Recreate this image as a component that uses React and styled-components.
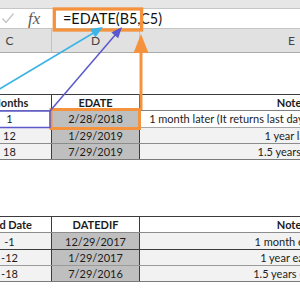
import React from 'react';
import styled, { createGlobalStyle } from 'styled-components';

const GlobalStyle = createGlobalStyle`
  html, body {
    margin: 0;
    padding: 0;
    background: #fff;
  }
  body {
    width: 300px;
    height: 300px;
    overflow: hidden;
  }
`;

const Sheet = styled.div`
  position: relative;
  width: 300px;
  height: 300px;
  overflow: hidden;
  background: #fff;
  font-family: Lato, "Liberation Sans", sans-serif;
  color: #1c1c1c;
`;

const TopStrip = styled.div`
  height: 8px;
  background: #e6e6e6;
  border-bottom: 1px solid #c6c6c6;
`;

const FormulaRow = styled.div`
  display: flex;
  align-items: center;
  height: 19px;
  border-bottom: 1px solid #c6c6c6;
  background: #fff;
`;

const NameArea = styled.div`
  display: flex;
  align-items: center;
  gap: 14px;
  width: 52px;
  padding-left: 2px;
  box-sizing: border-box;
`;

const Fx = styled.span`
  font-family: "Liberation Serif", serif;
  font-style: italic;
  font-size: 17px;
  color: #5a5a5a;
  line-height: 1;
`;

const FormulaText = styled.div`
  flex: 1;
  padding-left: 11px;
  font-size: 14.4px;
  color: #111;
  white-space: nowrap;
`;

const ColumnGrid = styled.div`
  display: grid;
  grid-template-columns: 84px 88px 304px;
  margin-left: -32px;
`;

const ColumnHeaders = styled(ColumnGrid)`
  height: 23px;
  background: #e1e1e1;
  border-bottom: 1px solid #ababab;
`;

const ColumnLetter = styled.div`
  display: flex;
  align-items: center;
  justify-content: center;
  font-size: 12px;
  color: #444;
  border-right: 1px solid #c4c4c4;
`;

const Table = styled.div`
  margin-top: ${(p) => p.$gap}px;
  border-top: 1px solid #3c3c3c;
`;

const Row = styled(ColumnGrid)`
  height: 16.3px;
  box-sizing: border-box;
  border-bottom: 1px solid ${(p) => p.$line || '#8c8c8c'};
`;

const Cell = styled.div`
  display: flex;
  align-items: center;
  justify-content: center;
  white-space: nowrap;
  font-size: 11px;
  font-weight: ${(p) => (p.$head ? 700 : 400)};
  background: ${(p) => p.$bg || '#fff'};
  border-right: 1px solid ${(p) => (p.$last ? 'transparent' : '#3c3c3c')};
  overflow: visible;
`;

const Overlay = styled.svg`
  position: absolute;
  left: 0;
  top: 0;
  pointer-events: none;
`;

const table1 = [
  { c: '1', d: '2/28/2018', e: '1 month later (It returns last day of the month for February)', bg: '#fff', line: '#a6a6a6' },
  { c: '12', d: '1/29/2019', e: '1 year later', bg: '#f2f2f2', line: '#8c8c8c' },
  { c: '18', d: '7/29/2019', e: '1.5 years later', bg: '#f2f2f2', line: '#7a7a7a' },
];

const table2 = [
  { c: '-1', d: '12/29/2017', e: '1 month earlier', bg: '#f2f2f2', line: '#3c3c3c' },
  { c: '-12', d: '1/29/2017', e: '1 year earlier', bg: '#f2f2f2', line: '#9a9a9a' },
  { c: '-18', d: '7/29/2016', e: '1.5 years earlier', bg: '#f2f2f2', line: '#7a7a7a' },
];

const DataTable = ({ gap, heads, rows, headLine }) => (
  <Table $gap={gap}>
    <Row $line={headLine}>
      <Cell $head>{heads[0]}</Cell>
      <Cell $head>{heads[1]}</Cell>
      <Cell $head $last>{heads[2]}</Cell>
    </Row>
    {rows.map((r) => (
      <Row key={r.d} $line={r.line}>
        <Cell $bg={r.bg}>{r.c}</Cell>
        <Cell $bg="#bfbfbf">{r.d}</Cell>
        <Cell $bg={r.bg} $last>{r.e}</Cell>
      </Row>
    ))}
  </Table>
);

const App = () => {
  return (
    <Sheet>
      <GlobalStyle />
      <TopStrip />
      <FormulaRow>
        <NameArea>
          <svg width="12" height="11" viewBox="0 0 12 11">
            <polyline points="0.5,5.5 4,9.5 11.5,0.5" fill="none" stroke="#c4c4c4" strokeWidth="1.3" />
          </svg>
          <Fx>fx</Fx>
        </NameArea>
        <FormulaText>=EDATE(B5,C5)</FormulaText>
      </FormulaRow>
      <ColumnHeaders>
        <ColumnLetter>C</ColumnLetter>
        <ColumnLetter>D</ColumnLetter>
        <ColumnLetter>E</ColumnLetter>
      </ColumnHeaders>

      <DataTable gap={41} heads={['Months', 'EDATE', 'Notes']} rows={table1} headLine="#808080" />
      <DataTable gap={56} heads={['End Date', 'DATEDIF', 'Notes']} rows={table2} headLine="#8c8c8c" />

      <Overlay width="300" height="300" viewBox="0 0 300 300">
        {/* orange formula + result highlight */}
        <rect x="54.3" y="9" width="87.3" height="21" fill="none" stroke="#f5923e" strokeWidth="3.3" />
        <rect x="51" y="109.5" width="88.5" height="19" fill="none" stroke="#f5923e" strokeWidth="3" />
        <line x1="141" y1="110" x2="141" y2="50" stroke="#f5923e" strokeWidth="3" />
        <polygon points="141,34 133.5,53 148.5,53" fill="#f5923e" />

        {/* months cell -> C5 */}
        <rect x="-2" y="111" width="52" height="16.5" fill="none" stroke="#5b58cc" strokeWidth="1.5" />
        <line x1="50" y1="111" x2="116" y2="34" stroke="#5b58cc" strokeWidth="1.5" />
        <polygon points="122,27 118.2,38.2 111.4,32.4" fill="#5b58cc" />

        {/* date cell -> B5 */}
        <line x1="-2" y1="90" x2="95" y2="32" stroke="#3db4e6" strokeWidth="1.6" />
        <polygon points="103,27 95.3,37.5 90.1,28.9" fill="#3db4e6" />
      </Overlay>
    </Sheet>
  );
};

export default App;
